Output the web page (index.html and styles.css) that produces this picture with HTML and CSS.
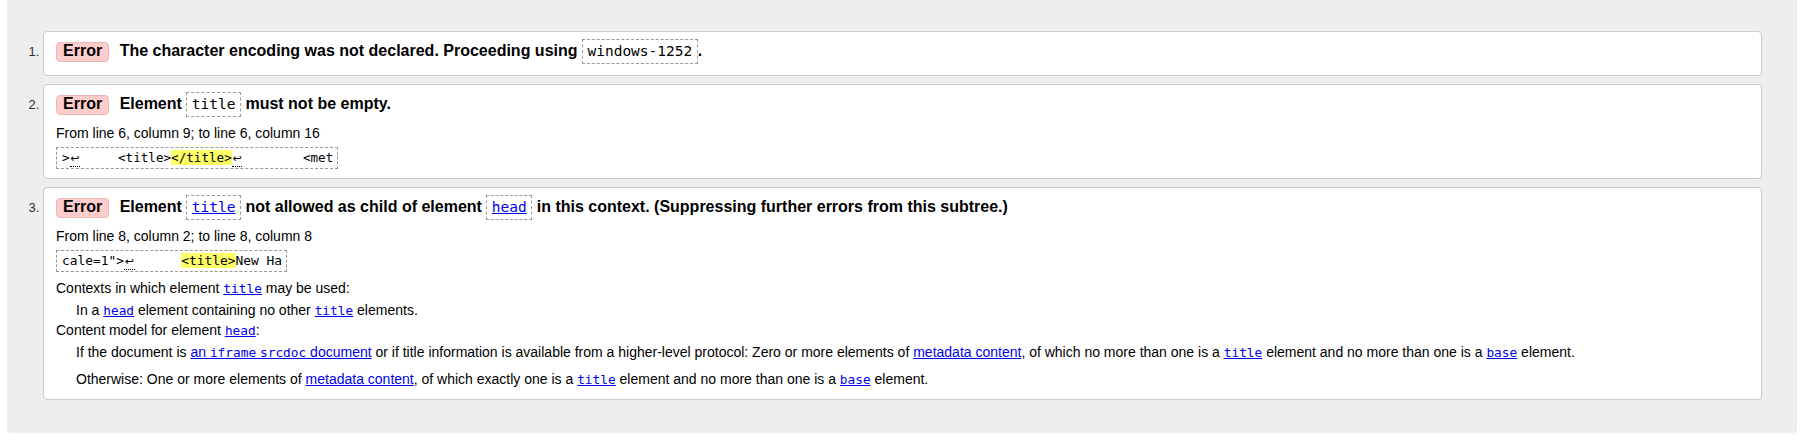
FILE: index.html
```html
<!DOCTYPE html>
<html lang="en">
<head>
<meta charset="utf-8">
<title>Validation results</title>
<link rel="stylesheet" href="styles.css">
</head>
<body>
<ol class="messages">
  <li class="msg">
    <p class="title"><strong class="badge">Error</strong>The character encoding was not declared. Proceeding using <code>windows-1252</code>.</p>
  </li>
  <li class="msg">
    <p class="title"><strong class="badge">Error</strong>Element <code>title</code> must not be empty.</p>
    <p class="location">From line 6, column 9; to line 6, column 16</p>
    <p class="extract"><code>&gt;<span class="lf">↩</span>     &lt;title&gt;<b>&lt;/title&gt;</b><span class="lf">↩</span>        &lt;met</code></p>
  </li>
  <li class="msg">
    <p class="title"><strong class="badge">Error</strong>Element <code><a href="#">title</a></code> not allowed as child of element <code><a href="#">head</a></code> in this context. (Suppressing further errors from this subtree.)</p>
    <p class="location">From line 8, column 2; to line 8, column 8</p>
    <p class="extract wide"><code>cale=1"&gt;<span class="lf">↩</span>      <b>&lt;title&gt;</b>New Ha</code></p>
    <dl class="context">
      <dt>Contexts in which element <a href="#"><code>title</code></a> may be used:</dt>
      <dd>In a <a href="#"><code>head</code></a> element containing no other <a href="#"><code>title</code></a> elements.</dd>
      <dt>Content model for element <a href="#"><code>head</code></a>:</dt>
      <dd>
        <p>If the document is <a href="#">an <code>iframe</code> <code>srcdoc</code> document</a> or if title information is available from a higher-level protocol: Zero or more elements of <a href="#">metadata content</a>, of which no more than one is a <a href="#"><code>title</code></a> element and no more than one is a <a href="#"><code>base</code></a> element.</p>
        <p>Otherwise: One or more elements of <a href="#">metadata content</a>, of which exactly one is a <a href="#"><code>title</code></a> element and no more than one is a <a href="#"><code>base</code></a> element.</p>
      </dd>
    </dl>
  </li>
</ol>
</body>
</html>
```
FILE: styles.css
```css
* {
  box-sizing: border-box;
}

html,
body {
  margin: 0;
  padding: 0;
  background: #fff;
}

body {
  font-family: "Liberation Sans", Arial, sans-serif;
  font-size: 14px;
  color: #000;
}

a {
  color: #00e;
  text-decoration: underline;
}

.messages {
  margin: 0 0 0 7px;
  width: 1790px;
  padding: 31px 35px 33px 36px;
  background: #eee;
  border-radius: 0 0 4px 4px;
  list-style: decimal outside;
}

.msg {
  background: #fff;
  border: 1px solid #ccc;
  border-radius: 4px;
  padding: 7px 12px 8px;
  margin: 0 0 8px;
}

.msg:last-child {
  margin-bottom: 0;
}

.msg::marker {
  font: 13px "Liberation Sans", Arial, sans-serif;
  color: #333;
}

.title {
  margin: 0 0 4px;
  font-size: 16px;
  font-weight: bold;
  line-height: 24px;
}

.badge {
  display: inline-block;
  padding: 0 6px 2px;
  line-height: 16px;
  background: #fcc;
  border: 1px solid #e9b9b9;
  border-radius: 4px;
  margin-right: 10.5px;
  font-weight: bold;
}

.title code {
  font: 14.5px/1 "DejaVu Sans Mono", monospace;
  font-weight: normal;
  padding: 3px 4.5px 4px;
  border: 1px dashed #999;
}

.location {
  margin: 7px 0 0;
  line-height: 20px;
}

.extract {
  display: flex;
  margin: 4px 0 1px;
}

.extract code {
  display: block;
  border: 1px dashed #999;
  padding: 0 4px 0 5px;
  font: 12.6px/20px "DejaVu Sans Mono", monospace;
  white-space: pre;
}

.extract.wide code {
  font-size: 12.9px;
}

.extract b {
  background: #ff6;
  font-weight: normal;
}

.lf {
  display: inline-block;
  width: 10.5px;
  line-height: 14px;
  font-family: "DejaVu Sans", sans-serif;
  font-size: 11px;
  text-align: center;
  border-bottom: 1px dotted #000;
}

.context {
  margin: 6px 0 0;
  line-height: 20px;
}

.context dt {
  margin: 0;
}

.context dd {
  margin: 2px 0 0 20px;
}

.context dd p {
  margin: 0;
}

.context dd p + p {
  margin-top: 7px;
}

.context dd:last-child p:last-child {
  margin-bottom: 2px;
}

.context code {
  font: 12.8px/1 "DejaVu Sans Mono", monospace;
}
```
